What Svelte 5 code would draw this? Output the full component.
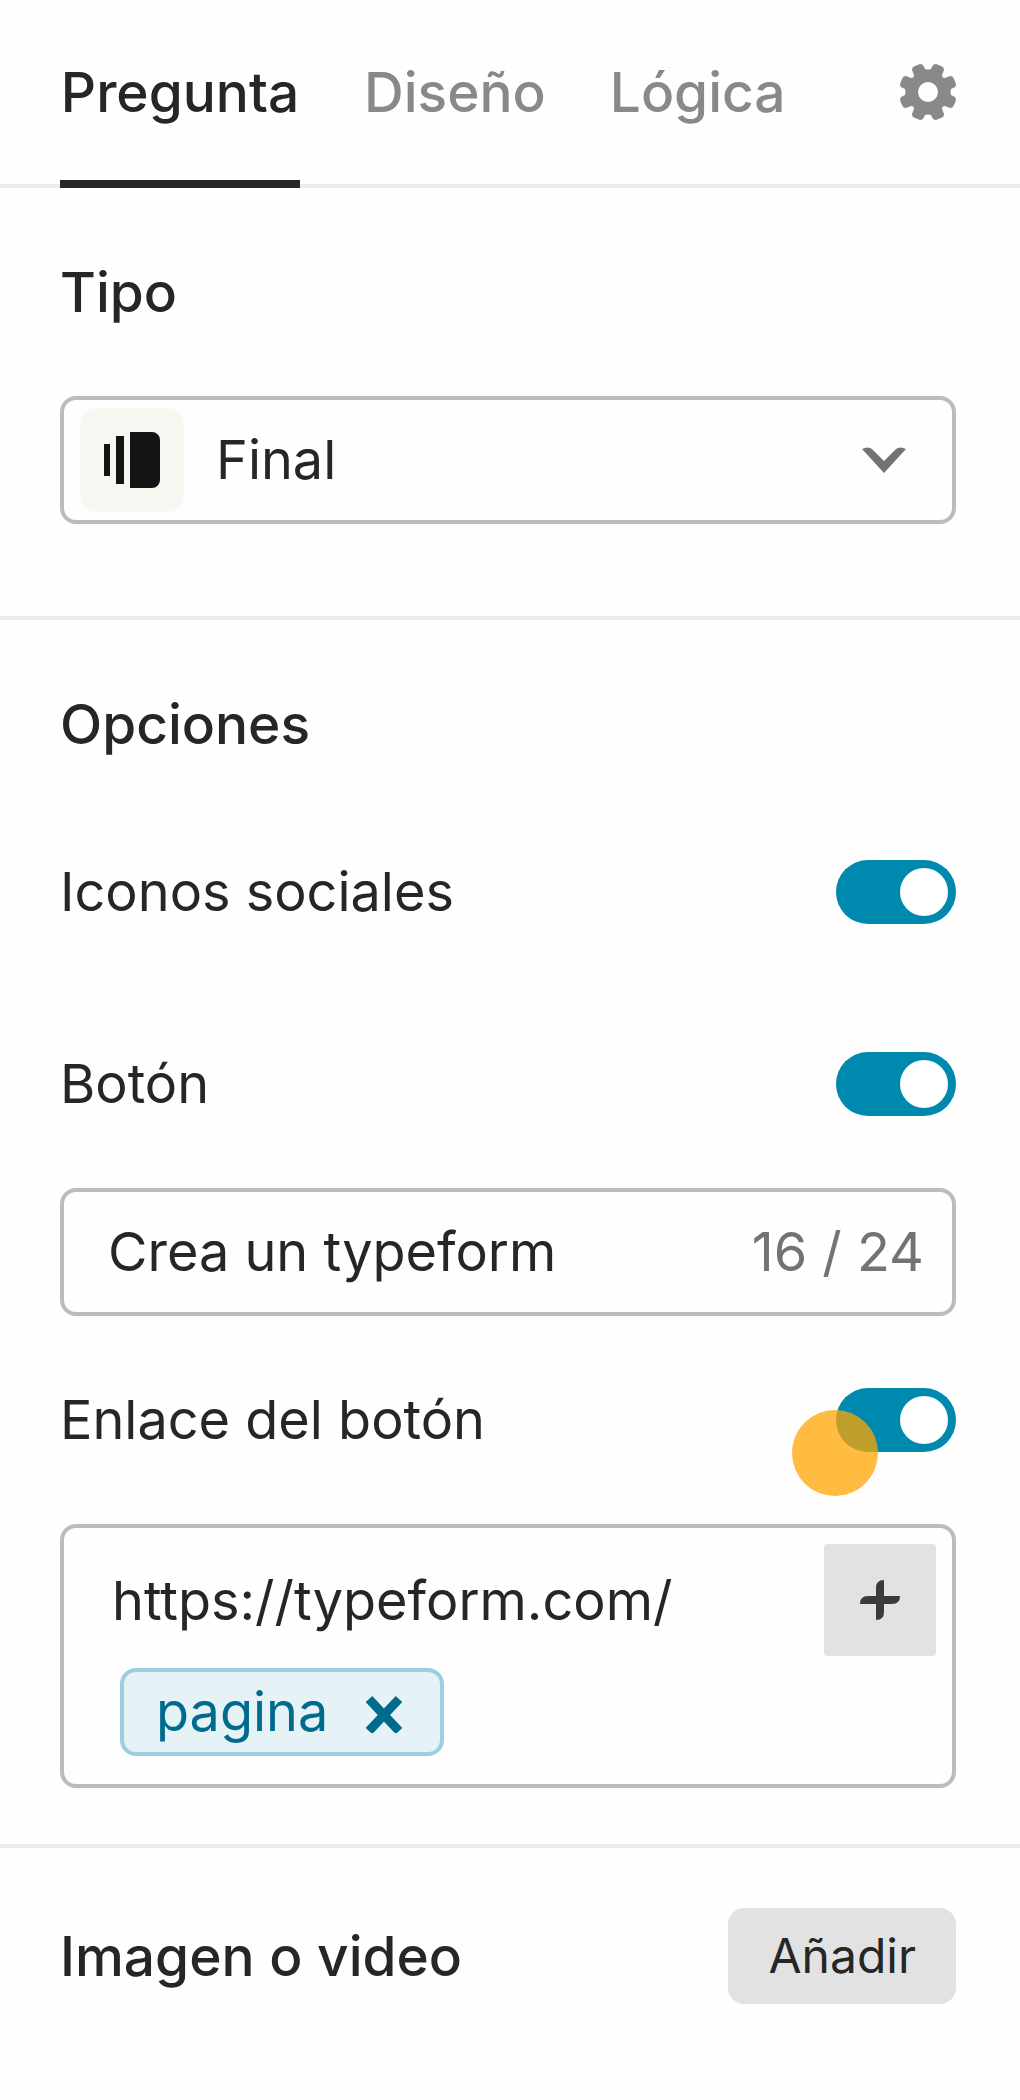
<script lang="ts">
	const tabs = ['Pregunta', 'Diseño', 'Lógica'];
	const maxLength = 24;

	let activeTab = $state('Pregunta');
	let tipo = $state('final');
	let socialIcons = $state(true);
	let button = $state(true);
	let buttonLink = $state(true);
	let buttonText = $state('Crea un typeform');
	let url = $state('https://typeform.com/');
	let variables = $state(['pagina']);

	function removeVariable(name: string) {
		variables = variables.filter((v) => v !== name);
	}
</script>

<aside class="panel">
	<header class="tabs">
		<nav>
			{#each tabs as tab}
				<button
					type="button"
					class="tab"
					class:active={tab === activeTab}
					onclick={() => (activeTab = tab)}
				>
					{tab}
				</button>
			{/each}
		</nav>
		<button type="button" class="settings" aria-label="Ajustes">
			<svg width="56" height="56" viewBox="0 0 56 56" fill="#898989">
				<path
					fill-rule="evenodd"
					d="M24 3Q23 0 20 0L15 2Q12 3 12 6L14 11Q14 14 11 14L6 12Q3 12 2 15L0 20Q0 23 3 24L5 25Q6 28 5 31L3 32Q0 33 0 36L2 41Q3 44 6 44L11 42Q14 42 14 45L12 50Q12 53 15 54L20 56Q23 56 24 53L25 51Q28 50 31 51L32 53Q33 56 36 56L41 54Q44 53 44 50L42 45Q42 42 45 42L50 44Q53 44 54 41L56 36Q56 33 53 32L51 31Q50 28 51 25L53 24Q56 23 56 20L54 15Q53 12 50 12L45 14Q42 14 42 11L44 6Q44 3 41 2L36 0Q33 0 32 3L31 5Q28 6 25 5ZM28 18a10 10 0 1 0 0 20a10 10 0 1 0 0-20Z"
				/>
			</svg>
		</button>
	</header>

	<section class="tipo">
		<h2><label for="tipo">Tipo</label></h2>
		<div class="select">
			<span class="tile">
				<svg width="56" height="56" viewBox="0 0 56 56" fill="#141414">
					<path d="M0 12h6v32H0zM12 4h8v48h-8zM26 0h22a8 8 0 0 1 8 8v40a8 8 0 0 1-8 8H26z" />
				</svg>
			</span>
			<select id="tipo" bind:value={tipo}>
				<option value="final">Final</option>
			</select>
			<svg class="chevron" width="44" height="26" viewBox="0 0 44 26" fill="#737373">
				<path d="M0 2Q6-1 10 2L22 14L34 2Q38-1 44 2L22 26Z" />
			</svg>
		</div>
	</section>

	<section class="opciones">
		<h2>Opciones</h2>
		<div class="row">
			<label for="social">Iconos sociales</label>
			<input id="social" class="toggle" type="checkbox" role="switch" bind:checked={socialIcons} />
		</div>
		<div class="row spaced">
			<label for="button">Botón</label>
			<input id="button" class="toggle" type="checkbox" role="switch" bind:checked={button} />
		</div>
		<div class="field">
			<input type="text" aria-label="Texto del botón" maxlength={maxLength} bind:value={buttonText} />
			<span class="counter">{buttonText.length} / {maxLength}</span>
		</div>
		<div class="row">
			<label for="link">Enlace del botón</label>
			<div class="toggle-wrap">
				<input id="link" class="toggle" type="checkbox" role="switch" bind:checked={buttonLink} />
				<span class="pointer"></span>
			</div>
		</div>
		<div class="url">
			<div class="url-content">
				<input type="text" aria-label="Enlace" bind:value={url} />
				{#each variables as name}
					<span class="chip">
						{name}
						<button type="button" aria-label="Quitar {name}" onclick={() => removeVariable(name)}>
							<svg width="38" height="42" viewBox="0 0 38 42" stroke="#006b8c" stroke-width="9">
								<path d="M3 8L33 40M33 8L3 40" />
							</svg>
						</button>
					</span>
				{/each}
			</div>
			<button type="button" class="add-variable" aria-label="Añadir variable">
				<svg width="40" height="40" viewBox="0 0 40 40" fill="#3a3a3a">
					<path d="M16 16V8Q16 0 24 0V16H40Q40 24 32 24H24V32Q24 40 16 40V24H0Q0 16 8 16Z" />
				</svg>
			</button>
		</div>
	</section>

	<section class="media">
		<h2>Imagen o video</h2>
		<button type="button" class="add">Añadir</button>
	</section>
</aside>

<style>
	:global(body) {
		margin: 0;
		background: #fefefe;
	}

	.panel {
		font-family: Inter, sans-serif;
		font-size: 54px;
		line-height: 72px;
		color: #262626;
	}

	.panel * {
		box-sizing: border-box;
	}

	button,
	input,
	select {
		margin: 0;
		padding: 0;
		border: 0;
		background: none;
		font: inherit;
		color: inherit;
	}

	button {
		cursor: pointer;
	}

	svg {
		display: block;
	}

	h2 {
		margin: 0;
		font-size: 55px;
		font-weight: 500;
	}

	.tabs {
		display: flex;
		justify-content: space-between;
		padding: 0 64px 0 60px;
		box-shadow: inset 0 -4px #ececec;
	}

	.tabs nav {
		display: flex;
		gap: 64px;
	}

	.tab {
		height: 188px;
		padding-top: 4px;
		border-bottom: 8px solid transparent;
		font-size: 55px;
		font-weight: 500;
		color: #898989;
	}

	.tab.active {
		min-width: 240px;
		border-color: #262626;
		color: #262626;
	}

	.settings {
		padding-bottom: 4px;
	}

	section {
		padding: 0 64px 0 60px;
		border-bottom: 4px solid #ececec;
	}

	.tipo {
		padding-top: 68px;
		padding-bottom: 92px;
	}

	.select {
		position: relative;
		display: flex;
		align-items: center;
		margin-top: 68px;
	}

	.select select {
		flex: 1;
		height: 128px;
		padding-left: 152px;
		border: 4px solid #bbb;
		border-radius: 16px;
		appearance: none;
	}

	.tile {
		position: absolute;
		left: 20px;
		display: grid;
		place-items: center;
		width: 104px;
		height: 104px;
		border-radius: 16px;
		background: #f7f6f1;
		pointer-events: none;
	}

	.chevron {
		position: absolute;
		right: 50px;
		pointer-events: none;
	}

	.opciones {
		padding-top: 68px;
		padding-bottom: 56px;
	}

	.row {
		display: flex;
		justify-content: space-between;
		align-items: center;
		height: 64px;
	}

	.opciones h2 {
		margin-bottom: 100px;
	}

	.spaced {
		margin-top: 128px;
	}

	.toggle {
		display: block;
		width: 120px;
		height: 64px;
		padding: 8px;
		border-radius: 32px;
		background: #bbb;
		appearance: none;
		cursor: pointer;
	}

	.toggle::before {
		content: '';
		display: block;
		width: 48px;
		height: 48px;
		border-radius: 50%;
		background: #fff;
	}

	.toggle:checked {
		background: #0089af;
	}

	.toggle:checked::before {
		margin-left: auto;
	}

	.toggle-wrap {
		position: relative;
	}

	.pointer {
		position: absolute;
		top: 22px;
		left: -44px;
		width: 86px;
		height: 86px;
		border-radius: 50%;
		background: rgba(255, 165, 0, 0.75);
		pointer-events: none;
	}

	.field {
		display: flex;
		align-items: center;
		height: 128px;
		margin: 72px 0;
		padding: 0 28px 0 44px;
		border: 4px solid #bbb;
		border-radius: 16px;
	}

	.field input {
		flex: 1;
		min-width: 0;
	}

	.counter {
		color: #737373;
	}

	.url {
		display: flex;
		align-items: flex-start;
		margin-top: 72px;
		padding: 16px 16px 28px 48px;
		border: 4px solid #bbb;
		border-radius: 16px;
	}

	.url-content {
		flex: 1;
		min-width: 0;
	}

	.url-content > input {
		display: block;
		width: 100%;
		height: 112px;
	}

	.chip {
		display: inline-flex;
		align-items: center;
		gap: 38px;
		height: 88px;
		margin: 12px 8px 0;
		padding: 0 36px 0 32px;
		border: 4px solid #9bcfde;
		border-radius: 16px;
		background: #e5f2f6;
		color: #006b8c;
		vertical-align: top;
	}

	.add-variable {
		display: grid;
		place-items: center;
		width: 112px;
		height: 112px;
		border-radius: 4px;
		background: #e2e2e2;
	}

	.media {
		display: flex;
		justify-content: space-between;
		align-items: center;
		padding-top: 60px;
		padding-bottom: 60px;
		border-bottom: 0;
	}

	.add {
		height: 96px;
		padding: 0 40px;
		border-radius: 16px;
		background: #e2e2e2;
		font-size: 48px;
	}
</style>
